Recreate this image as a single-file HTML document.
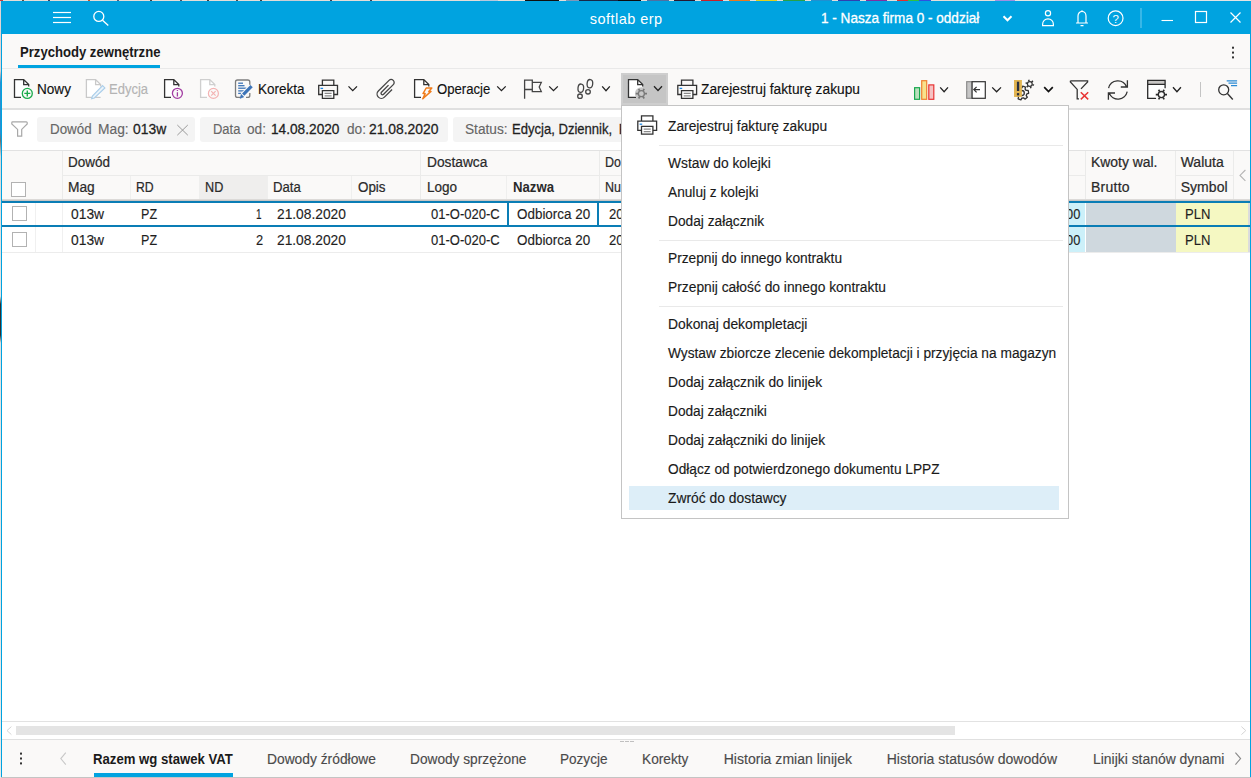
<!DOCTYPE html>
<html lang="pl"><head><meta charset="utf-8"><title>softlab erp - Przychody zewnętrzne</title>
<style>
html,body{margin:0;padding:0;}
body{width:1251px;height:778px;overflow:hidden;background:#fff;font-family:"Liberation Sans",sans-serif;}
#app{position:relative;width:1251px;height:778px;overflow:hidden;background:#fff;}
.t{position:absolute;line-height:1;white-space:nowrap;}
.r{position:absolute;}
svg{position:absolute;overflow:visible;}

</style></head><body>
<div id="app">
<div class="r" style="left:0px;top:0px;width:1251px;height:1px;background:#e3ddd8;"></div>
<div class="r" style="left:0px;top:0px;width:3px;height:1px;background:#c04040;"></div>
<div class="r" style="left:22px;top:0px;width:2px;height:1px;background:#605040;"></div>
<div class="r" style="left:48px;top:0px;width:2px;height:1px;background:#404060;"></div>
<div class="r" style="left:88px;top:0px;width:2px;height:1px;background:#d05020;"></div>
<div class="r" style="left:117px;top:0px;width:2px;height:1px;background:#506080;"></div>
<div class="r" style="left:150px;top:0px;width:2px;height:1px;background:#404040;"></div>
<div class="r" style="left:180px;top:0px;width:2px;height:1px;background:#505060;"></div>
<div class="r" style="left:207px;top:0px;width:2px;height:1px;background:#404040;"></div>
<div class="r" style="left:236px;top:0px;width:2px;height:1px;background:#505050;"></div>
<div class="r" style="left:260px;top:0px;width:2px;height:1px;background:#404040;"></div>
<div class="r" style="left:280px;top:0px;width:20px;height:1px;background:#c8ccd4;"></div>
<div class="r" style="left:330px;top:0px;width:2px;height:1px;background:#404050;"></div>
<div class="r" style="left:370px;top:0px;width:2px;height:1px;background:#404050;"></div>
<div class="r" style="left:480px;top:0px;width:18px;height:1px;background:#b8c8dc;"></div>
<div class="r" style="left:525px;top:0px;width:34px;height:1px;background:#101010;"></div>
<div class="r" style="left:566px;top:0px;width:13px;height:1px;background:#8098b8;"></div>
<div class="r" style="left:579px;top:0px;width:39px;height:1px;background:#182848;"></div>
<div class="r" style="left:618px;top:0px;width:23px;height:1px;background:#0c0c10;"></div>
<div class="r" style="left:647px;top:0px;width:22px;height:1px;background:#5070a0;"></div>
<div class="r" style="left:674px;top:0px;width:21px;height:1px;background:#281830;"></div>
<div class="r" style="left:701px;top:0px;width:22px;height:1px;background:#c82028;"></div>
<div class="r" style="left:729px;top:0px;width:21px;height:1px;background:#e87820;"></div>
<div class="r" style="left:756px;top:0px;width:21px;height:1px;background:#e0d020;"></div>
<div class="r" style="left:783px;top:0px;width:22px;height:1px;background:#28a048;"></div>
<div class="r" style="left:811px;top:0px;width:21px;height:1px;background:#2090d0;"></div>
<div class="r" style="left:838px;top:0px;width:22px;height:1px;background:#3040b0;"></div>
<div class="r" style="left:866px;top:0px;width:21px;height:1px;background:#8030a0;"></div>
<div class="r" style="left:897px;top:0px;width:11px;height:1px;background:#e03030;"></div>
<div class="r" style="left:908px;top:0px;width:11px;height:1px;background:#30c040;"></div>
<div class="r" style="left:919px;top:0px;width:12px;height:1px;background:#3050e0;"></div>
<div class="r" style="left:995px;top:0px;width:20px;height:1px;background:#a090e0;"></div>
<div class="r" style="left:1015px;top:0px;width:236px;height:1px;background:#e4e4e4;"></div>
<div class="r" style="left:0px;top:1px;width:1px;height:777px;background:linear-gradient(180deg,#e2d4d4 0,#e2d4d4 9%,#b0b0b8 9.5%,#2a90d0 10.5%,#2a90d0 17%,#707070 18%,#d8d8d8 20%,#e4e4e4 38%,#303030 39%,#303030 43%,#e0e0e0 44%,#e8e8e8 100%);"></div>
<div class="r" style="left:1px;top:1px;width:1px;height:777px;background:#00a3e0;"></div>
<div class="r" style="left:1250px;top:1px;width:1px;height:777px;background:#00a3e0;"></div>
<div class="r" style="left:1px;top:1px;width:1250px;height:33px;background:#00a3e0;"></div>
<div class="r" style="left:2px;top:34px;width:1248px;height:35px;background:#faf9f8;"></div>
<div class="r" style="left:2px;top:68px;width:1248px;height:1px;background:#e9e9e9;"></div>
<div class="r" style="left:18px;top:65px;width:142px;height:3px;background:#00a3e0;"></div>
<div class="r" style="left:2px;top:69px;width:1248px;height:39px;background:#faf9f8;"></div>
<div class="r" style="left:2px;top:108px;width:1248px;height:2px;background:#e0e0e0;"></div>
<div class="r" style="left:2px;top:110px;width:1248px;height:40px;background:#ffffff;"></div>
<div class="r" style="left:37px;top:117px;width:158px;height:25px;background:#f4f4f4;border-radius:3px;"></div>
<div class="r" style="left:200px;top:117px;width:248px;height:25px;background:#f4f4f4;border-radius:3px;"></div>
<div class="r" style="left:453px;top:117px;width:300px;height:25px;background:#f4f4f4;border-radius:3px;"></div>
<div class="r" style="left:2px;top:150px;width:1248px;height:1px;background:#e2e2e2;"></div>
<div class="r" style="left:2px;top:151px;width:1248px;height:48px;background:#faf9f8;"></div>
<div class="r" style="left:199px;top:176px;width:69px;height:23px;background:#efeeed;"></div>
<div class="r" style="left:62px;top:151px;width:1px;height:48px;background:#ebebea;"></div>
<div class="r" style="left:420px;top:151px;width:1px;height:48px;background:#ebebea;"></div>
<div class="r" style="left:599px;top:151px;width:1px;height:48px;background:#ebebea;"></div>
<div class="r" style="left:1085px;top:151px;width:1px;height:48px;background:#ebebea;"></div>
<div class="r" style="left:1175px;top:151px;width:1px;height:48px;background:#ebebea;"></div>
<div class="r" style="left:1233px;top:151px;width:1px;height:48px;background:#ebebea;"></div>
<div class="r" style="left:130px;top:176px;width:1px;height:23px;background:#efefee;"></div>
<div class="r" style="left:199px;top:176px;width:1px;height:23px;background:#efefee;"></div>
<div class="r" style="left:267px;top:176px;width:1px;height:23px;background:#efefee;"></div>
<div class="r" style="left:351px;top:176px;width:1px;height:23px;background:#efefee;"></div>
<div class="r" style="left:506px;top:176px;width:1px;height:23px;background:#efefee;"></div>
<div class="r" style="left:62px;top:175px;width:1023px;height:1px;background:#ebebea;"></div>
<div class="r" style="left:1175px;top:175px;width:58px;height:1px;background:#ebebea;"></div>
<div class="r" style="left:2px;top:199px;width:1248px;height:1px;background:#dcdad8;"></div>
<div class="r" style="left:2px;top:200px;width:1248px;height:1px;background:#c8c6c4;"></div>
<div class="r" style="left:1069px;top:203px;width:16px;height:22px;background:#ccf0f9;"></div>
<div class="r" style="left:1086px;top:203px;width:90px;height:22px;background:#cfd8de;"></div>
<div class="r" style="left:1176px;top:203px;width:72px;height:22px;background:#f5f8c2;"></div>
<div class="r" style="left:1248px;top:203px;width:2px;height:22px;background:#dcdcdc;"></div>
<div class="r" style="left:1069px;top:227px;width:16px;height:25px;background:#ccf0f9;"></div>
<div class="r" style="left:1086px;top:227px;width:90px;height:25px;background:#cfd8de;"></div>
<div class="r" style="left:1176px;top:227px;width:72px;height:25px;background:#f5f8c2;"></div>
<div class="r" style="left:1248px;top:227px;width:2px;height:25px;background:#dcdcdc;"></div>
<div class="r" style="left:2px;top:252px;width:1248px;height:1px;background:#ececec;"></div>
<div class="r" style="left:35px;top:203px;width:1px;height:49px;background:#f0f0f0;"></div>
<div class="r" style="left:62px;top:203px;width:1px;height:49px;background:#f0f0f0;"></div>
<div class="r" style="left:2px;top:201px;width:1248px;height:2px;background:#0a7db5;"></div>
<div class="r" style="left:2px;top:225px;width:1248px;height:2px;background:#0a7db5;"></div>
<div class="r" style="left:507px;top:203px;width:2px;height:22px;background:#0a7db5;"></div>
<div class="r" style="left:597px;top:203px;width:2px;height:22px;background:#0a7db5;"></div>
<div class="r" style="left:11px;top:182px;width:13px;height:13px;background:#fff;border:1px solid #b2b2b2;"></div>
<div class="r" style="left:12px;top:206px;width:13px;height:13px;background:#fff;border:1px solid #b2b2b2;"></div>
<div class="r" style="left:12px;top:232px;width:13px;height:13px;background:#fff;border:1px solid #b2b2b2;"></div>
<div class="r" style="left:2px;top:721px;width:1248px;height:1px;background:#e2e2e2;"></div>
<div class="r" style="left:16px;top:726px;width:939px;height:9px;background:#e4e4e4;"></div>
<div class="r" style="left:2px;top:739px;width:1248px;height:1px;background:#e0e0e0;"></div>
<div class="r" style="left:2px;top:740px;width:1248px;height:37px;background:#faf9f8;"></div>
<div class="r" style="left:94px;top:773px;width:139px;height:4px;background:#00a3e0;"></div>
<div class="r" style="left:1px;top:777px;width:1250px;height:1px;background:#c4c4c4;"></div>
<span class="t " style="left:589.85px;top:11px;line-height:16px;font-size:14.5px;color:#ffffff;letter-spacing:0.455px;">softlab erp</span>
<span class="t " style="left:821.05px;top:10px;line-height:16px;font-size:14px;color:#ffffff;transform:scaleX(0.9685);transform-origin:0 0;-webkit-text-stroke:0.3px #ffffff;">1 - Nasza firma 0 - oddział</span>
<span class="t " style="left:19.65px;top:44px;line-height:16px;font-size:14px;color:#1a1a1a;font-weight:bold;transform:scaleX(0.9354);transform-origin:0 0;">Przychody zewnętrzne</span>
<span class="t " style="left:37.15px;top:81px;line-height:16px;font-size:14px;color:#111;transform:scaleX(0.9696);transform-origin:0 0;-webkit-text-stroke:0.14px #111;">Nowy</span>
<span class="t " style="left:109.35px;top:81px;line-height:16px;font-size:14px;color:#b4b4b4;transform:scaleX(0.9291);transform-origin:0 0;-webkit-text-stroke:0.14px #b4b4b4;">Edycja</span>
<span class="t " style="left:257.95px;top:81px;line-height:16px;font-size:14px;color:#111;transform:scaleX(0.9625);transform-origin:0 0;-webkit-text-stroke:0.14px #111;">Korekta</span>
<span class="t " style="left:437.05px;top:81px;line-height:16px;font-size:14px;color:#111;transform:scaleX(0.9373);transform-origin:0 0;-webkit-text-stroke:0.14px #111;">Operacje</span>
<span class="t " style="left:701.05px;top:81px;line-height:16px;font-size:14px;color:#111;transform:scaleX(0.9821);transform-origin:0 0;-webkit-text-stroke:0.14px #111;">Zarejestruj fakturę zakupu</span>
<span class="t " style="left:49.75px;top:121px;line-height:16px;font-size:14px;color:#666666;transform:scaleX(0.9557);transform-origin:0 0;-webkit-text-stroke:0.14px #666666;">Dowód</span>
<span class="t " style="left:98.45px;top:121px;line-height:16px;font-size:14px;color:#666666;transform:scaleX(0.9848);transform-origin:0 0;-webkit-text-stroke:0.14px #666666;">Mag:</span>
<span class="t " style="left:132.85px;top:121px;line-height:16px;font-size:14px;color:#1f1f1f;transform:scaleX(0.9925);transform-origin:0 0;-webkit-text-stroke:0.27px #1f1f1f;">013w</span>
<span class="t " style="left:213.05px;top:121px;line-height:16px;font-size:14px;color:#666666;transform:scaleX(0.9245);transform-origin:0 0;-webkit-text-stroke:0.14px #666666;">Data</span>
<span class="t " style="left:247.45px;top:121px;line-height:16px;font-size:14px;color:#666666;transform:scaleX(0.9738);transform-origin:0 0;-webkit-text-stroke:0.14px #666666;">od:</span>
<span class="t " style="left:270.95px;top:121px;line-height:16px;font-size:14px;color:#1f1f1f;transform:scaleX(0.9769);transform-origin:0 0;-webkit-text-stroke:0.27px #1f1f1f;">14.08.2020</span>
<span class="t " style="left:346.55px;top:121px;line-height:16px;font-size:14px;color:#666666;transform:scaleX(0.9738);transform-origin:0 0;-webkit-text-stroke:0.14px #666666;">do:</span>
<span class="t " style="left:369.45px;top:121px;line-height:16px;font-size:14px;color:#1f1f1f;transform:scaleX(0.9912);transform-origin:0 0;-webkit-text-stroke:0.27px #1f1f1f;">21.08.2020</span>
<span class="t " style="left:465.45px;top:121px;line-height:16px;font-size:14px;color:#666666;transform:scaleX(0.9763);transform-origin:0 0;-webkit-text-stroke:0.14px #666666;">Status:</span>
<span class="t " style="left:512.45px;top:121px;line-height:16px;font-size:14px;color:#1f1f1f;transform:scaleX(0.9327);transform-origin:0 0;-webkit-text-stroke:0.27px #1f1f1f;">Edycja, Dziennik,</span>
<span class="t " style="left:618.85px;top:121px;line-height:16px;font-size:14px;color:#1f1f1f;-webkit-text-stroke:0.27px #1f1f1f;">K</span>
<span class="t " style="left:67.75px;top:154px;line-height:16px;font-size:14px;color:#2a2a2a;transform:scaleX(0.9626);transform-origin:0 0;-webkit-text-stroke:0.22px #2a2a2a;">Dowód</span>
<span class="t " style="left:427.25px;top:154px;line-height:16px;font-size:14px;color:#2a2a2a;transform:scaleX(0.9817);transform-origin:0 0;-webkit-text-stroke:0.22px #2a2a2a;">Dostawca</span>
<span class="t " style="left:605.15px;top:154px;line-height:16px;font-size:14px;color:#2a2a2a;transform:scaleX(0.8915);transform-origin:0 0;-webkit-text-stroke:0.22px #2a2a2a;">Do</span>
<span class="t " style="left:1090.95px;top:154px;line-height:16px;font-size:14px;color:#2a2a2a;transform:scaleX(0.9932);transform-origin:0 0;-webkit-text-stroke:0.22px #2a2a2a;">Kwoty wal.</span>
<span class="t " style="left:1180.65px;top:154px;line-height:16px;font-size:14px;color:#2a2a2a;letter-spacing:0.017px;-webkit-text-stroke:0.22px #2a2a2a;">Waluta</span>
<span class="t " style="left:67.75px;top:179px;line-height:16px;font-size:14px;color:#2a2a2a;transform:scaleX(0.9824);transform-origin:0 0;-webkit-text-stroke:0.22px #2a2a2a;">Mag</span>
<span class="t " style="left:136.45px;top:179px;line-height:16px;font-size:14px;color:#2a2a2a;transform:scaleX(0.8731);transform-origin:0 0;-webkit-text-stroke:0.22px #2a2a2a;">RD</span>
<span class="t " style="left:205.25px;top:179px;line-height:16px;font-size:14px;color:#2a2a2a;transform:scaleX(0.9028);transform-origin:0 0;-webkit-text-stroke:0.22px #2a2a2a;">ND</span>
<span class="t " style="left:273.45px;top:179px;line-height:16px;font-size:14px;color:#2a2a2a;transform:scaleX(0.9381);transform-origin:0 0;-webkit-text-stroke:0.22px #2a2a2a;">Data</span>
<span class="t " style="left:357.55px;top:179px;line-height:16px;font-size:14px;color:#2a2a2a;transform:scaleX(0.9571);transform-origin:0 0;-webkit-text-stroke:0.22px #2a2a2a;">Opis</span>
<span class="t " style="left:427.15px;top:179px;line-height:16px;font-size:14px;color:#2a2a2a;transform:scaleX(0.9647);transform-origin:0 0;-webkit-text-stroke:0.22px #2a2a2a;">Logo</span>
<span class="t " style="left:512.55px;top:179px;line-height:16px;font-size:14px;color:#2a2a2a;font-weight:bold;transform:scaleX(0.9401);transform-origin:0 0;">Nazwa</span>
<span class="t " style="left:605.15px;top:179px;line-height:16px;font-size:14px;color:#2a2a2a;transform:scaleX(0.8915);transform-origin:0 0;-webkit-text-stroke:0.22px #2a2a2a;">Nu</span>
<span class="t " style="left:1090.95px;top:179px;line-height:16px;font-size:14px;color:#2a2a2a;letter-spacing:0.260px;-webkit-text-stroke:0.22px #2a2a2a;">Brutto</span>
<span class="t " style="left:1180.65px;top:179px;line-height:16px;font-size:14px;color:#2a2a2a;letter-spacing:0.052px;-webkit-text-stroke:0.22px #2a2a2a;">Symbol</span>
<span class="t " style="left:71.45px;top:206px;line-height:16px;font-size:14px;color:#1f1f1f;transform:scaleX(0.9895);transform-origin:0 0;-webkit-text-stroke:0.14px #1f1f1f;">013w</span>
<span class="t " style="left:140.65px;top:206px;line-height:16px;font-size:14px;color:#1f1f1f;transform:scaleX(0.8970);transform-origin:0 0;-webkit-text-stroke:0.14px #1f1f1f;">PZ</span>
<span class="t " style="left:277.25px;top:206px;line-height:16px;font-size:14px;color:#1f1f1f;transform:scaleX(0.9826);transform-origin:0 0;-webkit-text-stroke:0.14px #1f1f1f;">21.08.2020</span>
<span class="t " style="left:431.45px;top:206px;line-height:16px;font-size:14px;color:#1f1f1f;transform:scaleX(0.9287);transform-origin:0 0;-webkit-text-stroke:0.14px #1f1f1f;">01-O-020-C</span>
<span class="t " style="left:516.55px;top:206px;line-height:16px;font-size:14px;color:#1f1f1f;transform:scaleX(0.9591);transform-origin:0 0;-webkit-text-stroke:0.14px #1f1f1f;">Odbiorca 20</span>
<span class="t " style="left:609.35px;top:206px;line-height:16px;font-size:14px;color:#1f1f1f;transform:scaleX(0.9346);transform-origin:0 0;-webkit-text-stroke:0.14px #1f1f1f;">20</span>
<span class="t " style="left:1065.65px;top:206px;line-height:16px;font-size:14px;color:#1f1f1f;transform:scaleX(0.9153);transform-origin:0 0;-webkit-text-stroke:0.14px #1f1f1f;">00</span>
<span class="t " style="left:1185.15px;top:206px;line-height:16px;font-size:14px;color:#1f1f1f;transform:scaleX(0.9310);transform-origin:0 0;-webkit-text-stroke:0.14px #1f1f1f;">PLN</span>
<span class="t " style="left:71.45px;top:232px;line-height:16px;font-size:14px;color:#1f1f1f;transform:scaleX(0.9895);transform-origin:0 0;-webkit-text-stroke:0.14px #1f1f1f;">013w</span>
<span class="t " style="left:140.65px;top:232px;line-height:16px;font-size:14px;color:#1f1f1f;transform:scaleX(0.8970);transform-origin:0 0;-webkit-text-stroke:0.14px #1f1f1f;">PZ</span>
<span class="t " style="left:277.25px;top:232px;line-height:16px;font-size:14px;color:#1f1f1f;transform:scaleX(0.9826);transform-origin:0 0;-webkit-text-stroke:0.14px #1f1f1f;">21.08.2020</span>
<span class="t " style="left:431.45px;top:232px;line-height:16px;font-size:14px;color:#1f1f1f;transform:scaleX(0.9287);transform-origin:0 0;-webkit-text-stroke:0.14px #1f1f1f;">01-O-020-C</span>
<span class="t " style="left:516.55px;top:232px;line-height:16px;font-size:14px;color:#1f1f1f;transform:scaleX(0.9591);transform-origin:0 0;-webkit-text-stroke:0.14px #1f1f1f;">Odbiorca 20</span>
<span class="t " style="left:609.35px;top:232px;line-height:16px;font-size:14px;color:#1f1f1f;transform:scaleX(0.9346);transform-origin:0 0;-webkit-text-stroke:0.14px #1f1f1f;">20</span>
<span class="t " style="left:1065.65px;top:232px;line-height:16px;font-size:14px;color:#1f1f1f;transform:scaleX(0.9153);transform-origin:0 0;-webkit-text-stroke:0.14px #1f1f1f;">00</span>
<span class="t " style="left:1185.15px;top:232px;line-height:16px;font-size:14px;color:#1f1f1f;transform:scaleX(0.9310);transform-origin:0 0;-webkit-text-stroke:0.14px #1f1f1f;">PLN</span>
<span class="t " style="left:256.05px;top:206px;line-height:16px;font-size:14px;color:#1f1f1f;transform:scaleX(0.7130);transform-origin:0 0;-webkit-text-stroke:0.14px #1f1f1f;">1</span>
<span class="t " style="left:255.75px;top:232px;line-height:16px;font-size:14px;color:#1f1f1f;transform:scaleX(0.9186);transform-origin:0 0;-webkit-text-stroke:0.14px #1f1f1f;">2</span>
<span class="t " style="left:92.95px;top:751px;line-height:16px;font-size:14px;color:#1a1a1a;font-weight:bold;transform:scaleX(0.9395);transform-origin:0 0;">Razem wg stawek VAT</span>
<span class="t " style="left:267.15px;top:751px;line-height:16px;font-size:14px;color:#4a4a4a;transform:scaleX(0.9860);transform-origin:0 0;-webkit-text-stroke:0.14px #4a4a4a;">Dowody źródłowe</span>
<span class="t " style="left:409.65px;top:751px;line-height:16px;font-size:14px;color:#4a4a4a;transform:scaleX(0.9781);transform-origin:0 0;-webkit-text-stroke:0.14px #4a4a4a;">Dowody sprzężone</span>
<span class="t " style="left:559.65px;top:751px;line-height:16px;font-size:14px;color:#4a4a4a;transform:scaleX(0.9681);transform-origin:0 0;-webkit-text-stroke:0.14px #4a4a4a;">Pozycje</span>
<span class="t " style="left:641.65px;top:751px;line-height:16px;font-size:14px;color:#4a4a4a;transform:scaleX(0.9787);transform-origin:0 0;-webkit-text-stroke:0.14px #4a4a4a;">Korekty</span>
<span class="t " style="left:723.65px;top:751px;line-height:16px;font-size:14px;color:#4a4a4a;letter-spacing:0.039px;-webkit-text-stroke:0.14px #4a4a4a;">Historia zmian linijek</span>
<span class="t " style="left:886.65px;top:751px;line-height:16px;font-size:14px;color:#4a4a4a;letter-spacing:0.032px;-webkit-text-stroke:0.14px #4a4a4a;">Historia statusów dowodów</span>
<span class="t " style="left:1092.65px;top:751px;line-height:16px;font-size:14px;color:#4a4a4a;transform:scaleX(0.9937);transform-origin:0 0;-webkit-text-stroke:0.14px #4a4a4a;">Linijki stanów dynami</span>
<div class="r" style="left:621px;top:73px;width:47px;height:32px;background:#c5c5c5;border:2px solid #cecece;box-sizing:border-box;"></div>
<div class="r" style="left:621px;top:105px;width:448px;height:414px;background:#ffffff;border:1px solid #c4c4c4;box-sizing:border-box;"></div>
<div class="r" style="left:659px;top:145px;width:404px;height:1px;background:#e9e9e9;"></div>
<div class="r" style="left:659px;top:240px;width:404px;height:1px;background:#e9e9e9;"></div>
<div class="r" style="left:659px;top:306px;width:404px;height:1px;background:#e9e9e9;"></div>
<div class="r" style="left:629px;top:486px;width:430px;height:24px;background:#ddeef8;"></div>
<span class="t " style="left:667.95px;top:118px;line-height:16px;font-size:14px;color:#1a1a1a;transform:scaleX(0.9827);transform-origin:0 0;-webkit-text-stroke:0.14px #1a1a1a;">Zarejestruj fakturę zakupu</span>
<span class="t " style="left:667.95px;top:155px;line-height:16px;font-size:14px;color:#1a1a1a;transform:scaleX(0.9865);transform-origin:0 0;-webkit-text-stroke:0.14px #1a1a1a;">Wstaw do kolejki</span>
<span class="t " style="left:667.95px;top:184px;line-height:16px;font-size:14px;color:#1a1a1a;transform:scaleX(0.9779);transform-origin:0 0;-webkit-text-stroke:0.14px #1a1a1a;">Anuluj z kolejki</span>
<span class="t " style="left:667.95px;top:213px;line-height:16px;font-size:14px;color:#1a1a1a;transform:scaleX(0.9804);transform-origin:0 0;-webkit-text-stroke:0.14px #1a1a1a;">Dodaj załącznik</span>
<span class="t " style="left:667.95px;top:250px;line-height:16px;font-size:14px;color:#1a1a1a;transform:scaleX(0.9808);transform-origin:0 0;-webkit-text-stroke:0.14px #1a1a1a;">Przepnij do innego kontraktu</span>
<span class="t " style="left:667.95px;top:279px;line-height:16px;font-size:14px;color:#1a1a1a;transform:scaleX(0.9861);transform-origin:0 0;-webkit-text-stroke:0.14px #1a1a1a;">Przepnij całość do innego kontraktu</span>
<span class="t " style="left:667.95px;top:316px;line-height:16px;font-size:14px;color:#1a1a1a;transform:scaleX(0.9900);transform-origin:0 0;-webkit-text-stroke:0.14px #1a1a1a;">Dokonaj dekompletacji</span>
<span class="t " style="left:667.95px;top:345px;line-height:16px;font-size:14px;color:#1a1a1a;transform:scaleX(0.9803);transform-origin:0 0;-webkit-text-stroke:0.14px #1a1a1a;">Wystaw zbiorcze zlecenie dekompletacji i przyjęcia na magazyn</span>
<span class="t " style="left:667.95px;top:374px;line-height:16px;font-size:14px;color:#1a1a1a;transform:scaleX(0.9854);transform-origin:0 0;-webkit-text-stroke:0.14px #1a1a1a;">Dodaj załącznik do linijek</span>
<span class="t " style="left:667.95px;top:403px;line-height:16px;font-size:14px;color:#1a1a1a;transform:scaleX(0.9771);transform-origin:0 0;-webkit-text-stroke:0.14px #1a1a1a;">Dodaj załączniki</span>
<span class="t " style="left:667.95px;top:432px;line-height:16px;font-size:14px;color:#1a1a1a;transform:scaleX(0.9849);transform-origin:0 0;-webkit-text-stroke:0.14px #1a1a1a;">Dodaj załączniki do linijek</span>
<span class="t " style="left:667.95px;top:461px;line-height:16px;font-size:14px;color:#1a1a1a;transform:scaleX(0.9774);transform-origin:0 0;-webkit-text-stroke:0.14px #1a1a1a;">Odłącz od potwierdzonego dokumentu LPPZ</span>
<span class="t " style="left:667.95px;top:490px;line-height:16px;font-size:14px;color:#1a1a1a;transform:scaleX(0.9894);transform-origin:0 0;-webkit-text-stroke:0.14px #1a1a1a;">Zwróć do dostawcy</span>
<svg width="1251" height="778" viewBox="0 0 1251 778" style="left:0;top:0;"><path d="M53,12.5 H71" stroke="#ffffff" stroke-width="1.2" fill="none" />
<path d="M53,17.5 H71" stroke="#ffffff" stroke-width="1.2" fill="none" />
<path d="M53,22.5 H71" stroke="#ffffff" stroke-width="1.2" fill="none" />
<path d="M93.80,16.40 a5.0,5.0 0 1,0 10.0,0 a5.0,5.0 0 1,0 -10.0,0 Z" stroke="#ffffff" stroke-width="1.3" fill="none" />
<path d="M102.5,20.2 L108.3,25.5" stroke="#ffffff" stroke-width="1.4" fill="none" />
<path d="M1003.5,16.3 L1007.5,20.3 L1011.5,16.3" stroke="#ffffff" stroke-width="2" fill="none" />
<path d="M1045.40,13.20 a2.6,2.6 0 1,0 5.2,0 a2.6,2.6 0 1,0 -5.2,0 Z" stroke="#ffffff" stroke-width="1.2" fill="none" />
<path d="M1042.6,25.6 V24.4 a5.4,5.6 0 0,1 10.8,0 V25.6 Z" stroke="#ffffff" stroke-width="1.2" fill="none" />
<path d="M1076,23 H1088 M1078,23 V16 a4,4.6 0 0,1 8,0 V23 M1080.5,25.6 H1083.5 M1082,10.2 V11.4" stroke="#ffffff" stroke-width="1.2" fill="none" />
<path d="M1108.20,18.20 a7.4,7.4 0 1,0 14.8,0 a7.4,7.4 0 1,0 -14.8,0 Z" stroke="#ffffff" stroke-width="1.2" fill="none" />
<text x="1115.7" y="22.6" font-size="11.5" fill="#fff" text-anchor="middle" font-family="Liberation Sans, sans-serif">?</text>
<rect x="1140" y="8" width="2" height="20" fill="#ffffff" opacity="0.22"/>
<path d="M1161.5,20.5 H1173" stroke="#ffffff" stroke-width="1.1" fill="none" />
<rect x="1195.5" y="11.5" width="11" height="11" fill="none" stroke="#fff" stroke-width="1.2"/>
<path d="M1230.5,12.5 L1240.5,22.5 M1240.5,12.5 L1230.5,22.5" stroke="#ffffff" stroke-width="1.2" fill="none" />
<rect x="1232" y="46.7" width="2" height="2" fill="#333"/>
<rect x="1232" y="51.6" width="2" height="2" fill="#333"/>
<rect x="1232" y="56.4" width="2" height="2" fill="#333"/>
<path d="M14.5,97.4 V79.6 H23.7 L28.7,84.6 V97.4 Z" fill="#ffffff"/>
<path d="M21,97.4 H14.5 V79.6 H23.7 L28.7,84.6 V86.39999999999999 M23.7,79.6 V84.6 H28.7" stroke="#333" stroke-width="1.3" fill="none" stroke-linejoin="miter"/>
<path d="M22.30,93.40 a5.0,5.0 0 1,0 10.0,0 a5.0,5.0 0 1,0 -10.0,0 Z" stroke="#1aab4b" stroke-width="1.3" fill="#faf9f8" />
<path d="M24.3,93.4 H30.3 M27.3,90.4 V96.4" stroke="#1aab4b" stroke-width="1.4" fill="none" />
<path d="M86.4,97.4 V79.6 H95.6 L100.6,84.6 V97.4 Z" fill="#ffffff"/>
<path d="M100.6,97.4 H86.4 V79.6 H95.6 L100.6,84.6 V86.39999999999999 M95.6,79.6 V84.6 H100.6" stroke="#c9c9c9" stroke-width="1.3" fill="none" stroke-linejoin="miter"/>
<path d="M102.6,85.6 L104.9,87.9 L94.4,98.0 L91.6,98.8 L92.4,96.0 Z" stroke="#a9cde9" stroke-width="1.1" fill="#eaf3fa" />
<path d="M164.6,97.4 V79.6 H173.79999999999998 L178.79999999999998,84.6 V97.4 Z" fill="#ffffff"/>
<path d="M171,97.4 H164.6 V79.6 H173.79999999999998 L178.79999999999998,84.6 V86.39999999999999 M173.79999999999998,79.6 V84.6 H178.79999999999998" stroke="#333" stroke-width="1.3" fill="none" stroke-linejoin="miter"/>
<path d="M172.40,93.30 a5.0,5.0 0 1,0 10.0,0 a5.0,5.0 0 1,0 -10.0,0 Z" stroke="#a23ca2" stroke-width="1.3" fill="#faf9f8" />
<path d="M177.4,92.2 V96.4 M177.4,90 V91" stroke="#a23ca2" stroke-width="1.3" fill="none" />
<path d="M200.6,97.4 V79.6 H209.79999999999998 L214.79999999999998,84.6 V97.4 Z" fill="#ffffff"/>
<path d="M207,97.4 H200.6 V79.6 H209.79999999999998 L214.79999999999998,84.6 V86.39999999999999 M209.79999999999998,79.6 V84.6 H214.79999999999998" stroke="#cfcfcf" stroke-width="1.3" fill="none" stroke-linejoin="miter"/>
<path d="M208.40,93.40 a5.0,5.0 0 1,0 10.0,0 a5.0,5.0 0 1,0 -10.0,0 Z" stroke="#f3b3b3" stroke-width="1.2" fill="#faf9f8" />
<path d="M211.2,91.2 L215.6,95.6 M215.6,91.2 L211.2,95.6" stroke="#f3b3b3" stroke-width="1.2" fill="none" />
<path d="M241,97.4 H237.5 a2,2 0 0,1 -2,-2 V82 a2,2 0 0,1 2,-2 H247.8 a2,2 0 0,1 2,2 V85 M249.8,93 V95.4 a2,2 0 0,1 -2,2 H246" stroke="#7d7d7d" stroke-width="1.3" fill="none" />
<path d="M238.2,83.2 H243" stroke="#3c74b8" stroke-width="1.3" fill="none" />
<path d="M238.2,85.7 H244.5" stroke="#3c74b8" stroke-width="1.3" fill="none" />
<path d="M238.2,88.2 H246.5" stroke="#3c74b8" stroke-width="1.3" fill="none" />
<path d="M238.2,90.9 H244" stroke="#3c74b8" stroke-width="1.3" fill="none" />
<path d="M238.2,93.4 H241.5" stroke="#3c74b8" stroke-width="1.3" fill="none" />
<path d="M251.4,86.4 L242.6,95.3" stroke="#faf9f8" stroke-width="5.4" fill="none" />
<path d="M251.6,86.2 L243.2,94.7" stroke="#3c74b8" stroke-width="3.2" fill="none" />
<path d="M241.2,94.3 L243.9,97.0 L240.0,98.4 Z" stroke="#3c74b8" stroke-width="0.4" fill="#3c74b8" />
<path d="M322.40000000000003,85.3 V80.1 H333.8 V85.3" stroke="#333" stroke-width="1.3" fill="none" />
<path d="M322.40000000000003,94.5 H318.70000000000005 V85.4 H337.5 V94.5 H333.8" stroke="#333" stroke-width="1.3" fill="none" />
<path d="M322.40000000000003,90.6 H333.8 V98.4 H322.40000000000003 Z" stroke="#333" stroke-width="1.3" fill="#fff" />
<path d="M324.6,93.4 H331.6 M324.6,95.9 H331.6" stroke="#8a8a8a" stroke-width="1.2" fill="none" />
<path d="M320.5,88.4 H323.1" stroke="#1e88e5" stroke-width="1.3" fill="none" />
<path d="M348.5,86.4 L352.75,90.7 L357,86.4" stroke="#222" stroke-width="1.3" fill="none" />
<g transform="translate(386.2,89.3) rotate(45)"><path d="M4.3,-4 V6.8 a4.3,4.3 0 0,1 -8.6,0 V-8.3 a3,3 0 0,1 6,0 V5.4 a1.5,1.5 0 0,1 -3,0 V-4.6" stroke="#444" stroke-width="1.3" fill="none"/></g>
<path d="M414.59999999999997,97.4 V79.6 H423.8 L428.8,84.6 V97.4 Z" fill="#ffffff"/>
<path d="M421,97.4 H414.59999999999997 V79.6 H423.8 L428.8,84.6 V86.39999999999999 M423.8,79.6 V84.6 H428.8" stroke="#333" stroke-width="1.3" fill="none" stroke-linejoin="miter"/>
<path d="M426.2,88.0 H431.8 L428.8,91.4 H431.0 L422.8,98.8 L425.2,93.6 H423.0 Z" stroke="#f07d1c" stroke-width="1.5" fill="#faf9f8" stroke-linejoin="round"/>
<path d="M497.2,86.4 L501.45,90.7 L505.7,86.4" stroke="#222" stroke-width="1.3" fill="none" />
<path d="M524.6,79.5 V98.8 M524.6,80.1 H532.3 V89.5 H524.6 M532.3,82.4 H541.3 L539.2,87 L541.3,91.6 H532.3 V89" stroke="#444" stroke-width="1.3" fill="none" />
<path d="M549.2,86.4 L553.5,90.7 L557.8,86.4" stroke="#222" stroke-width="1.3" fill="none" />
<g stroke="#444" stroke-width="1.3" fill="none"><ellipse cx="580.8" cy="88.2" rx="2.8" ry="4.2" transform="rotate(6 580.8 88.2)"/><ellipse cx="580.0" cy="96.2" rx="2.3" ry="2.2"/><ellipse cx="589.9" cy="83.7" rx="2.8" ry="4.2" transform="rotate(6 589.9 83.7)"/><ellipse cx="588.0" cy="91.8" rx="2.3" ry="2.2"/></g>
<path d="M602.2,86.4 L606.0,90.7 L609.8,86.4" stroke="#222" stroke-width="1.3" fill="none" />
<path d="M628.5,97.4 V79.6 H637.7 L642.7,84.6 V97.4 Z" fill="#ffffff"/>
<path d="M636,97.4 H628.5 V79.6 H637.7 L642.7,84.6 V86.39999999999999 M637.7,79.6 V84.6 H642.7" stroke="#333" stroke-width="1.3" fill="none" stroke-linejoin="miter"/>
<circle cx="641.4" cy="93.7" r="6.5" fill="#c6c6c6"/>
<path d="M644.70,93.70 L647.00,93.70 M643.05,96.56 L644.20,98.55 M639.75,96.56 L638.60,98.55 M638.10,93.70 L635.80,93.70 M639.75,90.84 L638.60,88.85 M643.05,90.84 L644.20,88.85 " stroke="#787878" stroke-width="1.7" fill="none"/>
<circle cx="641.4" cy="93.7" r="3.0" stroke="#787878" stroke-width="1.3" fill="#c9c9c9"/>
<path d="M654,86.3 L658.0,90.5 L662,86.3" stroke="#222" stroke-width="1.3" fill="none" />
<path d="M681.5,85.3 V80.1 H692.9000000000001 V85.3" stroke="#333" stroke-width="1.3" fill="none" />
<path d="M681.5,94.5 H677.8000000000001 V85.4 H696.6 V94.5 H692.9000000000001" stroke="#333" stroke-width="1.3" fill="none" />
<path d="M681.5,90.6 H692.9000000000001 V98.4 H681.5 Z" stroke="#333" stroke-width="1.3" fill="#fff" />
<path d="M683.7,93.4 H690.7 M683.7,95.9 H690.7" stroke="#8a8a8a" stroke-width="1.2" fill="none" />
<path d="M679.6,88.4 H682.2" stroke="#1e88e5" stroke-width="1.3" fill="none" />
<rect x="914.6" y="87.7" width="5" height="11.6" fill="#b9e0bd" stroke="#18a84e" stroke-width="1.2"/>
<rect x="921.7" y="80.7" width="5" height="18.6" fill="#f8e28c" stroke="#ef8030" stroke-width="1.2"/>
<rect x="928.8" y="84.9" width="5" height="14.4" fill="#f5c2c2" stroke="#e83434" stroke-width="1.2"/>
<path d="M940.2,87.4 L944.1,91.8 L948,87.4" stroke="#222" stroke-width="1.3" fill="none" />
<rect x="966.7" y="81.7" width="5.4" height="16.6" fill="#c6c6c6" stroke="#8c8c8c" stroke-width="1.2"/>
<rect x="972.1" y="81.7" width="13.2" height="16.6" fill="#fff" stroke="#333" stroke-width="1.2"/>
<path d="M980,89.6 H973.8 M976.6,86.8 L973.8,89.6 L976.6,92.4" stroke="#333" stroke-width="1.2" fill="none" />
<path d="M992.2,87.4 L996.6,91.8 L1001,87.4" stroke="#222" stroke-width="1.3" fill="none" />
<path d="M1026.23,90.47 L1028.17,90.35 L1028.69,93.31 L1026.83,93.87 L1026.21,95.57 L1027.28,97.19 L1024.98,99.13 L1023.56,97.79 L1021.78,98.10 L1020.91,99.84 L1018.08,98.81 L1018.54,96.92 L1017.37,95.53 L1015.43,95.65 L1014.91,92.69 L1016.77,92.13 L1017.39,90.43 L1016.32,88.81 L1018.62,86.87 L1020.04,88.21 L1021.82,87.90 L1022.69,86.16 L1025.52,87.19 L1025.06,89.08 Z" stroke="#333" stroke-width="1.3" fill="none" stroke-linejoin="round"/>
<path d="M1019.30,93.00 a2.5,2.5 0 1,0 5.0,0 a2.5,2.5 0 1,0 -5.0,0 Z" stroke="#333" stroke-width="1.3" fill="none" />
<rect x="1014" y="80" width="7.9" height="16.9" fill="#e2b552"/>
<rect x="1016.9" y="81.7" width="2.3" height="9.3" fill="#2a3040"/><rect x="1016.9" y="93.1" width="2.3" height="2.3" fill="#2a3040"/>
<path d="M1032.41,84.70 L1034.05,85.14 M1030.50,86.61 L1030.94,88.25 M1027.89,85.91 L1026.69,87.11 M1027.19,83.30 L1025.55,82.86 M1029.10,81.39 L1028.66,79.75 M1031.71,82.09 L1032.91,80.89 " stroke="#333" stroke-width="1.5" fill="none"/>
<circle cx="1029.8" cy="84.0" r="2.4" stroke="#333" stroke-width="1.2" fill="none"/>
<path d="M1044.2,87.2 L1048.5,91.6 L1052.8,87.2" stroke="#111" stroke-width="1.7" fill="none" />
<path d="M1070.4,80.8 H1087.6 V82 L1081,88.9 M1070.4,80.8 V82 L1077.2,89.4 V98.8 H1079" stroke="#333" stroke-width="1.3" fill="none" />
<path d="M1080.8,92.2 L1088.2,99.4 M1088.2,92.2 L1080.8,99.4" stroke="#e83434" stroke-width="1.5" fill="none" />
<path d="M1108.6,88.2 A9.4,9.4 0 0,1 1126.6,87 M1127.4,80.2 V87 H1120.8" stroke="#333" stroke-width="1.3" fill="none" />
<path d="M1127.2,91.6 A9.4,9.4 0 0,1 1109.2,93 M1108.4,99.8 V93 H1115" stroke="#333" stroke-width="1.3" fill="none" />
<rect x="1147.7" y="80.4" width="17.4" height="17.9" fill="#ffffff"/>
<rect x="1147.7" y="80.4" width="17.4" height="3.9" fill="#c8c6c4"/>
<path d="M1156.2,98.3 H1147.7 V80.4 H1165.1 V88.2 M1147.7,84.3 H1165.1" stroke="#2a2a2a" stroke-width="1.3" fill="none" />
<circle cx="1161.4" cy="94.6" r="6.5" fill="#faf9f8"/>
<path d="M1164.80,94.60 L1167.00,94.60 M1163.10,97.54 L1164.20,99.45 M1159.70,97.54 L1158.60,99.45 M1158.00,94.60 L1155.80,94.60 M1159.70,91.66 L1158.60,89.75 M1163.10,91.66 L1164.20,89.75 " stroke="#2a2a2a" stroke-width="1.6" fill="none"/>
<circle cx="1161.4" cy="94.6" r="3.1" stroke="#2a2a2a" stroke-width="1.3" fill="#faf9f8"/>
<path d="M1173,87.3 L1176.95,91.6 L1180.9,87.3" stroke="#222" stroke-width="1.4" fill="none" />
<rect x="1200" y="82" width="1" height="15" fill="#c4c4c4"/>
<path d="M1218.70,89.80 a5.0,5.0 0 1,0 10.0,0 a5.0,5.0 0 1,0 -10.0,0 Z" stroke="#333" stroke-width="1.3" fill="none" />
<path d="M1227.4,93.6 L1232.8,99.4" stroke="#333" stroke-width="1.4" fill="none" />
<path d="M1226.7,80.8 H1237.1 M1228.5,83.2 H1237.1 M1231,85.7 H1237.1" stroke="#2a8ad4" stroke-width="1.2" fill="none" />
<path d="M12.6,121.9 H26.4 a0.8,0.8 0 0,1 0.8,0.8 V124 L21.7,129.4 V136.1 H17.6 V129.4 L11.8,124 V122.7 a0.8,0.8 0 0,1 0.8,-0.8 Z" stroke="#a8a8a8" stroke-width="1.2" fill="none" />
<path d="M177.3,125 L187.8,135.2 M187.8,125 L177.3,135.2" stroke="#9a9a9a" stroke-width="1.0" fill="none" />
<path d="M1245.4,170 L1240,175.4 L1245.4,180.8" stroke="#b4b4b4" stroke-width="1.1" fill="none" />
<path d="M11.4,726.6 L7,730.6 L11.4,734.6" stroke="#d6d6d6" stroke-width="1.0" fill="none" />
<path d="M1241.4,726.6 L1245.8,730.6 L1241.4,734.6" stroke="#d6d6d6" stroke-width="1.0" fill="none" />
<rect x="20" y="752.6" width="2" height="2" fill="#333"/>
<rect x="20" y="757.5" width="2" height="2" fill="#333"/>
<rect x="20" y="762.4" width="2" height="2" fill="#333"/>
<path d="M65.8,752.6 L60.8,758.6 L65.8,764.6" stroke="#c8c8c8" stroke-width="1.1" fill="none" />
<path d="M1235.4,752.6 L1240.6,758.6 L1235.4,764.6" stroke="#8a8a8a" stroke-width="1.1" fill="none" />
<rect x="620" y="741" width="4" height="1" fill="#c0c0c0"/><rect x="625" y="741" width="4" height="1" fill="#c0c0c0"/><rect x="630" y="741" width="4" height="1" fill="#c0c0c0"/>
<path d="M641.5,121.1 V115.89999999999999 H652.9000000000001 V121.1" stroke="#333" stroke-width="1.3" fill="none" />
<path d="M641.5,130.3 H637.8000000000001 V121.2 H656.6 V130.3 H652.9000000000001" stroke="#333" stroke-width="1.3" fill="none" />
<path d="M641.5,126.39999999999999 H652.9000000000001 V134.2 H641.5 Z" stroke="#333" stroke-width="1.3" fill="#fff" />
<path d="M643.7,129.2 H650.7 M643.7,131.7 H650.7" stroke="#8a8a8a" stroke-width="1.2" fill="none" />
<path d="M639.6,124.2 H642.2" stroke="#1e88e5" stroke-width="1.3" fill="none" /></svg>
</div>
</body></html>
